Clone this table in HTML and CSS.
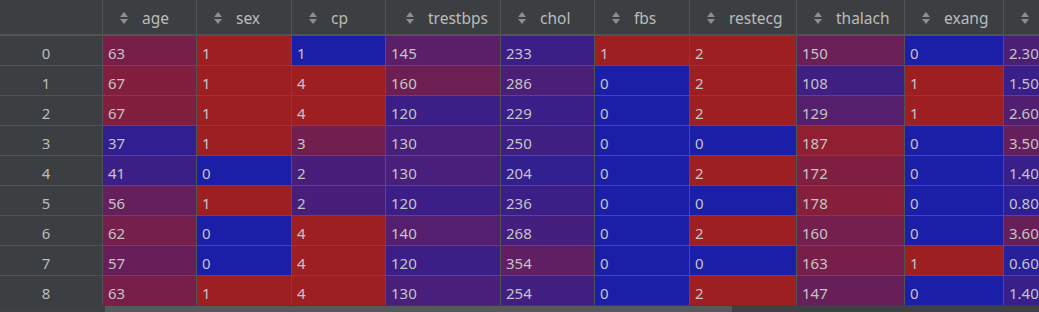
FILE: index.html
```html
<!DOCTYPE html>
<html>
<head>
<meta charset="utf-8">
<link rel="stylesheet" href="styles.css">
</head>
<body>
<div class="view">
  <div class="grid">
    <div class="hd corner"></div>
    <div class="hd"><svg class="sort" viewBox="0 0 8 12"><polygon points="0,5 4,0 8,5"/><polygon points="0,7 8,7 4,12"/></svg><span>age</span></div>
    <div class="hd"><svg class="sort" viewBox="0 0 8 12"><polygon points="0,5 4,0 8,5"/><polygon points="0,7 8,7 4,12"/></svg><span>sex</span></div>
    <div class="hd"><svg class="sort" viewBox="0 0 8 12"><polygon points="0,5 4,0 8,5"/><polygon points="0,7 8,7 4,12"/></svg><span>cp</span></div>
    <div class="hd wide"><svg class="sort" viewBox="0 0 8 12"><polygon points="0,5 4,0 8,5"/><polygon points="0,7 8,7 4,12"/></svg><span>trestbps</span></div>
    <div class="hd"><svg class="sort" viewBox="0 0 8 12"><polygon points="0,5 4,0 8,5"/><polygon points="0,7 8,7 4,12"/></svg><span>chol</span></div>
    <div class="hd"><svg class="sort" viewBox="0 0 8 12"><polygon points="0,5 4,0 8,5"/><polygon points="0,7 8,7 4,12"/></svg><span>fbs</span></div>
    <div class="hd"><svg class="sort" viewBox="0 0 8 12"><polygon points="0,5 4,0 8,5"/><polygon points="0,7 8,7 4,12"/></svg><span>restecg</span></div>
    <div class="hd"><svg class="sort" viewBox="0 0 8 12"><polygon points="0,5 4,0 8,5"/><polygon points="0,7 8,7 4,12"/></svg><span>thalach</span></div>
    <div class="hd"><svg class="sort" viewBox="0 0 8 12"><polygon points="0,5 4,0 8,5"/><polygon points="0,7 8,7 4,12"/></svg><span>exang</span></div>
    <div class="hd"><svg class="sort" viewBox="0 0 8 12"><polygon points="0,5 4,0 8,5"/><polygon points="0,7 8,7 4,12"/></svg><span>oldpeak</span></div>

    <div class="idx">0</div>
    <div class="c" style="background:rgb(120,31,73)">63</div>
    <div class="c red">1</div>
    <div class="c blue">1</div>
    <div class="c" style="background:rgb(90,31,104)">145</div>
    <div class="c" style="background:rgb(59,31,135)">233</div>
    <div class="c red">1</div>
    <div class="c red">2</div>
    <div class="c" style="background:rgb(106,31,87)">150</div>
    <div class="c blue">0</div>
    <div class="c" style="background:rgb(76,31,118)">2.30</div>

    <div class="idx">1</div>
    <div class="c" style="background:rgb(131,31,62)">67</div>
    <div class="c red">1</div>
    <div class="c red">4</div>
    <div class="c" style="background:rgb(109,31,84)">160</div>
    <div class="c" style="background:rgb(75,31,119)">286</div>
    <div class="c blue">0</div>
    <div class="c red">2</div>
    <div class="c" style="background:rgb(64,31,130)">108</div>
    <div class="c red">1</div>
    <div class="c" style="background:rgb(59,31,136)">1.50</div>

    <div class="idx">2</div>
    <div class="c" style="background:rgb(131,31,62)">67</div>
    <div class="c red">1</div>
    <div class="c red">4</div>
    <div class="c" style="background:rgb(59,31,135)">120</div>
    <div class="c" style="background:rgb(58,31,136)">229</div>
    <div class="c blue">0</div>
    <div class="c red">2</div>
    <div class="c" style="background:rgb(85,31,109)">129</div>
    <div class="c red">1</div>
    <div class="c" style="background:rgb(82,31,112)">2.60</div>

    <div class="idx">3</div>
    <div class="c" style="background:rgb(49,31,146)">37</div>
    <div class="c red">1</div>
    <div class="c" style="background:rgb(114,31,79)">3</div>
    <div class="c" style="background:rgb(72,31,122)">130</div>
    <div class="c" style="background:rgb(64,31,130)">250</div>
    <div class="c blue">0</div>
    <div class="c blue">0</div>
    <div class="c" style="background:rgb(143,31,49)">187</div>
    <div class="c blue">0</div>
    <div class="c" style="background:rgb(101,31,92)">3.50</div>

    <div class="idx">4</div>
    <div class="c" style="background:rgb(60,31,134)">41</div>
    <div class="c blue">0</div>
    <div class="c" style="background:rgb(71,31,123)">2</div>
    <div class="c" style="background:rgb(72,31,122)">130</div>
    <div class="c" style="background:rgb(50,31,144)">204</div>
    <div class="c blue">0</div>
    <div class="c red">2</div>
    <div class="c" style="background:rgb(128,31,65)">172</div>
    <div class="c blue">0</div>
    <div class="c" style="background:rgb(57,31,138)">1.40</div>

    <div class="idx">5</div>
    <div class="c" style="background:rgb(101,31,93)">56</div>
    <div class="c red">1</div>
    <div class="c" style="background:rgb(71,31,123)">2</div>
    <div class="c" style="background:rgb(59,31,135)">120</div>
    <div class="c" style="background:rgb(60,31,134)">236</div>
    <div class="c blue">0</div>
    <div class="c blue">0</div>
    <div class="c" style="background:rgb(134,31,59)">178</div>
    <div class="c blue">0</div>
    <div class="c" style="background:rgb(44,31,151)">0.80</div>

    <div class="idx">6</div>
    <div class="c" style="background:rgb(117,31,76)">62</div>
    <div class="c blue">0</div>
    <div class="c red">4</div>
    <div class="c" style="background:rgb(84,31,110)">140</div>
    <div class="c" style="background:rgb(69,31,125)">268</div>
    <div class="c blue">0</div>
    <div class="c red">2</div>
    <div class="c" style="background:rgb(116,31,77)">160</div>
    <div class="c blue">0</div>
    <div class="c" style="background:rgb(103,31,90)">3.60</div>

    <div class="idx">7</div>
    <div class="c" style="background:rgb(103,31,90)">57</div>
    <div class="c blue">0</div>
    <div class="c red">4</div>
    <div class="c" style="background:rgb(59,31,135)">120</div>
    <div class="c" style="background:rgb(95,31,98)">354</div>
    <div class="c blue">0</div>
    <div class="c blue">0</div>
    <div class="c" style="background:rgb(119,31,74)">163</div>
    <div class="c red">1</div>
    <div class="c" style="background:rgb(40,31,155)">0.60</div>

    <div class="idx">8</div>
    <div class="c" style="background:rgb(120,31,73)">63</div>
    <div class="c red">1</div>
    <div class="c red">4</div>
    <div class="c" style="background:rgb(72,31,122)">130</div>
    <div class="c" style="background:rgb(65,31,129)">254</div>
    <div class="c blue">0</div>
    <div class="c red">2</div>
    <div class="c" style="background:rgb(103,31,90)">147</div>
    <div class="c blue">0</div>
    <div class="c" style="background:rgb(57,31,138)">1.40</div>
  </div>
</div>
<div class="scrollbar"><div class="thumb"></div></div>
</body>
</html>
```

FILE: styles.css
```css
html, body {
  margin: 0;
  padding: 0;
  width: 1039px;
  height: 312px;
  overflow: hidden;
  background: #3c3f41;
}

body {
  font-family: "Noto Sans", "Open Sans", sans-serif;
  font-size: 15px;
  color: #bbbbbb;
}

.view {
  height: 306px;
  width: 1039px;
  overflow: hidden;
}

.grid {
  display: grid;
  grid-template-columns: 102px 93px 94px 93px 114px 93px 94px 106px 107px 98px 120px;
  grid-template-rows: 35px;
  grid-auto-rows: 29px;
  gap: 1px;
  width: max-content;
  background: #505254;
}

.hd {
  background: #3c3f41;
  border-bottom: 1px solid #505254;
  display: flex;
  align-items: center;
  justify-content: flex-start;
  gap: 14px;
  padding: 1px 0 0 17px;
  font-size: 15.5px;
  color: #bbbbbb;
  white-space: nowrap;
  overflow: hidden;
}

.hd.wide {
  padding-left: 20px;
}

.sort {
  width: 8px;
  height: 12px;
  fill: #8c8e90;
  flex: none;
}

.idx {
  background: #3c3f41;
  display: flex;
  align-items: center;
  justify-content: center;
  padding: 4px 10px 0 0;
}

.c {
  display: flex;
  align-items: center;
  padding: 5px 0 0 5px;
  white-space: nowrap;
  overflow: hidden;
  color: #c4c4c4;
}

.red { background: #9e1f22; }
.blue { background: #1b1fa8; }

.scrollbar {
  height: 6px;
  background: #3e4143;
  padding-left: 105px;
}

.thumb {
  width: 627px;
  height: 6px;
  background: #56595b;
}
```
